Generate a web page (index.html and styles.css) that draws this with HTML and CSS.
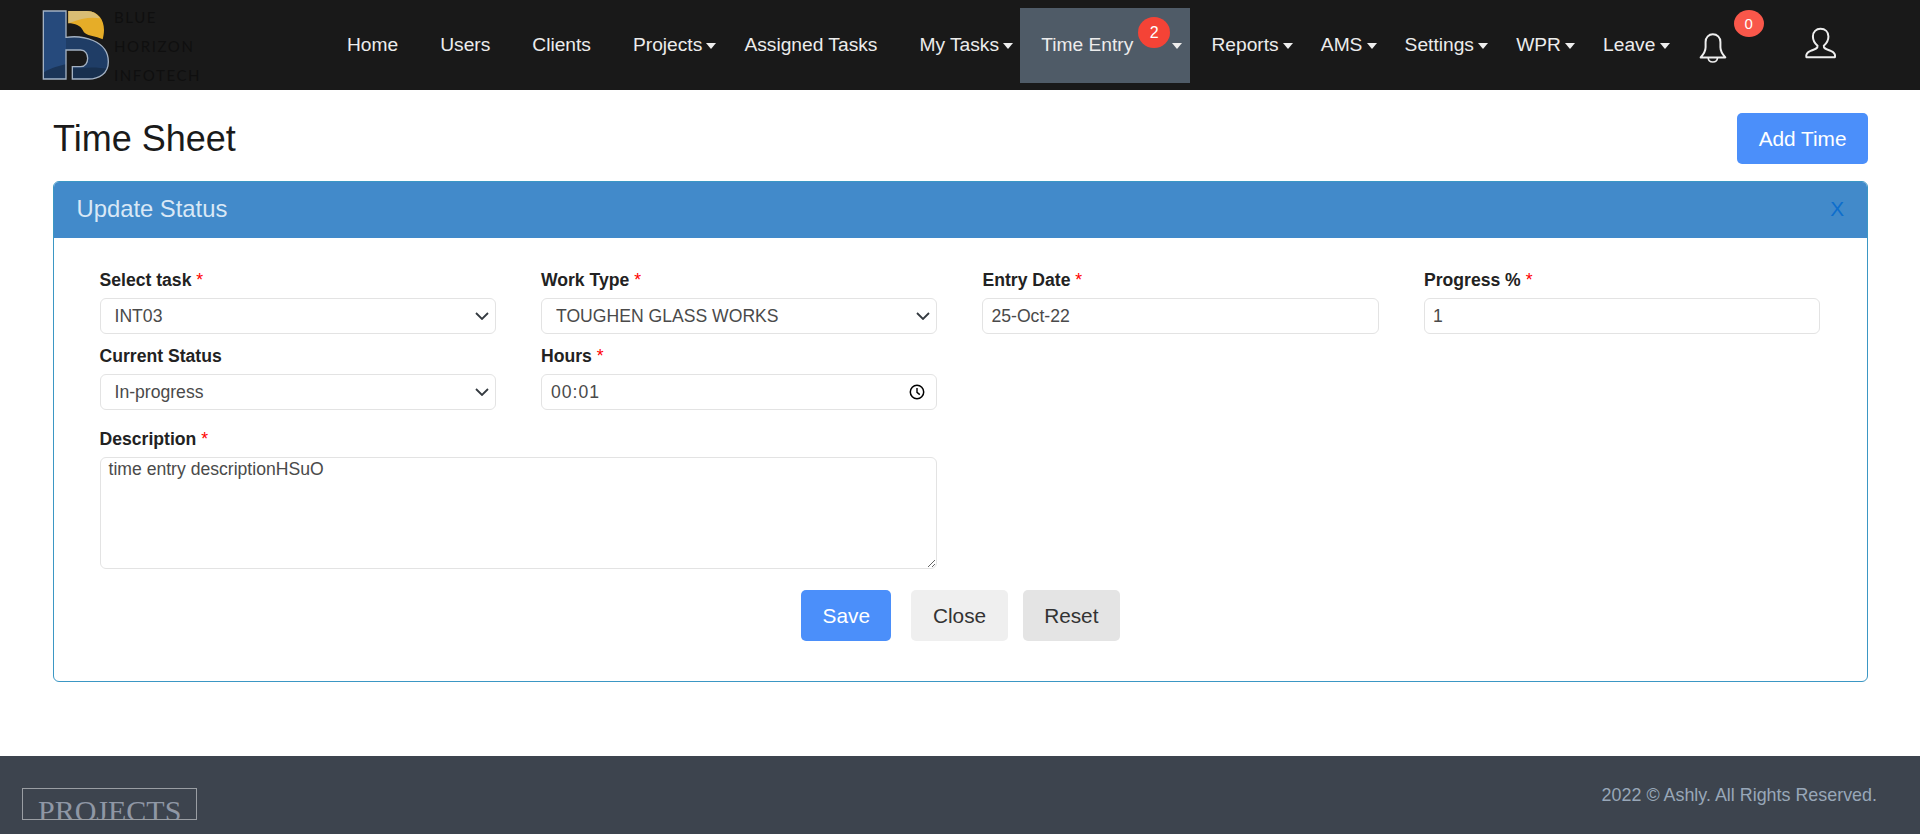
FILE: index.html
```html
<!DOCTYPE html>
<html lang="en">
<head>
    <meta charset="UTF-8">
    <title>Time Sheet</title>
    <link rel="stylesheet" href="styles.css">
</head>
<body>

    <!-- Top navigation -->
    <nav class="navbar">
        <a class="brand" href="#">
            <svg class="brand-mark" viewBox="0 0 225 240" aria-hidden="true">
                <path d="M10 18H78V97C125 90 205 105 205 170C205 205 178 222 145 222H97V185H122C150 185 150 135 122 135H78V222H10Z" fill="#264a7c"/>
                <path d="M78 97C125 90 205 105 205 170C205 205 178 222 145 222H97V185H122C150 185 150 135 122 135H78Z" fill="#1f3d66"/>
                <path d="M12 202C35 188 58 182 78 178V220H12Z" fill="#1b3558"/>
                <path d="M97 190H128C150 186 180 188 202 192C195 210 175 220 145 220H97Z" fill="#18304f"/>
                <path d="M10 18H78V97C125 90 205 105 205 170C205 205 178 222 145 222H97V185H122C150 185 150 135 122 135H78V222H10Z" fill="none" stroke="#a3b1c2" stroke-width="4"/>
                <path d="M85 18H140C175 18 192 45 192 75C192 85 190 95 188 103C170 92 135 95 128 75C122 62 105 55 85 55Z" fill="#e6ad28"/>
                <path d="M85 18H140C160 18 172 28 180 40C155 35 120 40 95 52L85 55Z" fill="#d9bd74"/>
            </svg>
            <span class="brand-name">
                <span>BLUE</span>
                <span>HORIZON</span>
                <span>INFOTECH</span>
            </span>
        </a>

        <a class="nav-link" href="#">Home</a>
        <a class="nav-link" href="#">Users</a>
        <a class="nav-link" href="#">Clients</a>
        <a class="nav-link has-menu" href="#">Projects</a>
        <a class="nav-link" href="#">Assigned Tasks</a>
        <a class="nav-link has-menu" href="#">My Tasks</a>
        <a class="nav-link has-menu active" href="#">Time Entry<span class="badge badge-entry">2</span></a>
        <a class="nav-link has-menu" href="#">Reports</a>
        <a class="nav-link has-menu" href="#">AMS</a>
        <a class="nav-link has-menu" href="#">Settings</a>
        <a class="nav-link has-menu" href="#">WPR</a>
        <a class="nav-link has-menu" href="#">Leave</a>

        <a class="nav-icon bell" href="#">
            <svg class="icon-bell" viewBox="55 95 85 95" aria-hidden="true">
                <path d="M60 171C70 160 75 152 75 140V124C75 110 85 101 97 101C110 101 120 110 120 124V140C120 152 125 160 135 171Z" fill="none" stroke="#eee" stroke-width="6" stroke-linejoin="round"/>
                <path d="M83 173C84 189 110 189 111 173" fill="none" stroke="#eee" stroke-width="5"/>
            </svg>
            <span class="badge badge-bell">0</span>
        </a>
        <a class="nav-icon user" href="#">
            <svg class="icon-user" viewBox="370 80 100 96" aria-hidden="true">
                <path d="M377 171C375 160 380 156 390 152C402 147 412 146 411 136C404 130 397 120 397 108C397 94 407 85 420 85C434 85 444 94 444 108C444 120 437 130 430 136C429 146 439 147 451 152C461 156 466 160 464 171Z" fill="none" stroke="#eee" stroke-width="6" stroke-linejoin="round"/>
            </svg>
        </a>
    </nav>

    <main class="content">
        <div class="page-head">
            <h1>Time Sheet</h1>
            <button class="btn btn-primary" type="button">Add Time</button>
        </div>

        <section class="card">
            <header class="card-head">
                <h2>Update Status</h2>
                <a class="card-close" href="#">X</a>
            </header>

            <form class="card-body">
                <div class="form-grid">
                    <div class="field">
                        <label>Select task <span class="req">*</span></label>
                        <div class="select-wrap">
                            <select class="control"><option>INT03</option></select>
                            <svg class="chevron" viewBox="0 0 14 8" aria-hidden="true"><path d="M1 1L7 7L13 1" fill="none" stroke="#343a40" stroke-width="1.8"/></svg>
                        </div>
                    </div>
                    <div class="field">
                        <label>Work Type <span class="req">*</span></label>
                        <div class="select-wrap">
                            <select class="control"><option>TOUGHEN GLASS WORKS</option></select>
                            <svg class="chevron" viewBox="0 0 14 8" aria-hidden="true"><path d="M1 1L7 7L13 1" fill="none" stroke="#343a40" stroke-width="1.8"/></svg>
                        </div>
                    </div>
                    <div class="field">
                        <label>Entry Date <span class="req">*</span></label>
                        <input class="control text" type="text" value="25-Oct-22">
                    </div>
                    <div class="field">
                        <label>Progress % <span class="req">*</span></label>
                        <input class="control text" type="text" value="1">
                    </div>
                    <div class="field">
                        <label>Current Status</label>
                        <div class="select-wrap">
                            <select class="control"><option>In-progress</option></select>
                            <svg class="chevron" viewBox="0 0 14 8" aria-hidden="true"><path d="M1 1L7 7L13 1" fill="none" stroke="#343a40" stroke-width="1.8"/></svg>
                        </div>
                    </div>
                    <div class="field">
                        <label>Hours <span class="req">*</span></label>
                        <div class="control time">
                            <input type="text" value="00:01">
                            <svg class="icon-clock" viewBox="0 0 16 16" aria-hidden="true">
                                <circle cx="8" cy="8" r="6.7" fill="none" stroke="#000" stroke-width="1.5"/>
                                <path d="M8 4V8.3L10.8 10.6" fill="none" stroke="#000" stroke-width="1.4"/>
                            </svg>
                        </div>
                    </div>
                    <div class="field field-wide">
                        <label>Description <span class="req">*</span></label>
                        <textarea class="control area">time entry descriptionHSuO</textarea>
                    </div>
                </div>

                <div class="form-actions">
                    <button class="btn btn-primary" type="button">Save</button>
                    <button class="btn btn-light" type="button">Close</button>
                    <button class="btn btn-grey" type="button">Reset</button>
                </div>
            </form>
        </section>
    </main>

    <footer class="footer">
        <div class="footer-logo">PROJECTS</div>
        <p class="copyright">2022 © Ashly. All Rights Reserved.</p>
    </footer>

</body>
</html>
```

FILE: styles.css
```css
body {
    margin: 0;
    font-family: "Liberation Sans", Arial, sans-serif;
    color: #212529;
    background-color: #fff;
}

a {
    text-decoration: none;
}

/* Top navigation */
.navbar {
    display: flex;
    align-items: flex-start;
    height: 90px;
    box-sizing: border-box;
    padding: 8px 0 7px 43px;
    background-color: #191919;
}

.brand {
    display: flex;
    width: 283px;
    height: 75px;
}

.brand-mark {
    flex: none;
    width: 75px;
    height: 80px;
    margin: -3px 0 0 -3px;
}

.brand-name {
    display: flex;
    flex-direction: column;
    margin: -5px 0 0 -1px;
    font-family: "Lato", sans-serif;
    font-size: 15px;
    line-height: 29.2px;
    letter-spacing: 1.6px;
    color: #0f0f0f;
}

.nav-link {
    position: relative;
    display: flex;
    align-items: center;
    height: 73px;
    padding: 0 21px 2px;
    font-size: 19.2px;
    color: #ececec;
    white-space: nowrap;
}

.nav-link.has-menu {
    padding-right: 7px;
}

.nav-link.has-menu::after {
    content: "";
    margin: 3px 0 0 4.2px;
    border-top: 6px solid #eee;
    border-left: 5.5px solid transparent;
    border-right: 5.5px solid transparent;
}

.nav-link.active {
    background-color: #4f5b67;
    padding-right: 8px;
}

.nav-link.active::after {
    margin-left: 39.2px;
}

.badge {
    position: absolute;
    display: flex;
    align-items: center;
    justify-content: center;
    color: #fff;
    border-radius: 50%;
}

.badge-entry {
    left: 118px;
    top: 9px;
    width: 32px;
    height: 31px;
    font-size: 16px;
    background-color: #f44336;
}

.badge-bell {
    left: 35px;
    top: 2px;
    width: 30px;
    height: 27px;
    font-size: 15px;
    background-color: #f9574a;
}

.nav-icon {
    position: relative;
    display: flex;
    height: 75px;
}

.bell {
    margin-left: 22px;
}

.user {
    margin-left: 77px;
}

.icon-bell {
    width: 28px;
    height: 32px;
    margin-top: 24px;
}

.icon-user {
    width: 33px;
    height: 32px;
    margin-top: 19px;
}

/* Page */
.content {
    padding: 23px 52px 0 53px;
}

.page-head {
    display: flex;
    align-items: center;
    justify-content: space-between;
    margin-bottom: 17px;
}

h1 {
    margin: 0;
    font-size: 36px;
    font-weight: 400;
    color: #1a1a1a;
}

.btn {
    height: 51px;
    padding: 0 21.5px;
    font-family: inherit;
    font-size: 20.8px;
    border: none;
    border-radius: 5px;
}

.btn-primary {
    color: #fff;
    background-color: #4b8ffa;
}

.btn-light {
    color: #333;
    background-color: #efefef;
}

.btn-grey {
    color: #333;
    background-color: #e4e4e4;
}

/* Update status card */
.card {
    height: 501px;
    box-sizing: border-box;
    border: 1px solid #3b97c4;
    border-radius: 6px;
    overflow: hidden;
}

.card-head {
    display: flex;
    align-items: center;
    justify-content: space-between;
    height: 54px;
    padding: 0 23px 2px 22.5px;
    background-color: #428aca;
}

.card-head h2 {
    margin: 0;
    font-size: 23.8px;
    font-weight: 400;
    color: #d9e8f6;
}

.card-close {
    font-size: 20.8px;
    color: #0d6ecd;
}

.card-body {
    padding: 33px 45.5px 0;
}

.form-grid {
    display: grid;
    grid-template-columns: repeat(4, 396.3px);
    column-gap: 45.2px;
}

.field {
    display: flex;
    flex-direction: column;
}

.field-wide {
    grid-column: 1 / span 2;
    margin-top: 7px;
}

label {
    height: 19px;
    margin-bottom: 8px;
    font-size: 17.6px;
    line-height: 19px;
    font-weight: 700;
    color: #222;
}

.req {
    font-weight: 400;
    color: #f00;
}

.control {
    box-sizing: border-box;
    width: 100%;
    height: 36px;
    margin-bottom: 13px;
    font-family: inherit;
    font-size: 17.6px;
    color: #4a4a4a;
    background-color: #fff;
    border: 1px solid #e3e3e3;
    border-radius: 6px;
}

.select-wrap {
    position: relative;
}

.select-wrap select {
    display: block;
    padding-left: 14px;
    appearance: none;
}

.chevron {
    position: absolute;
    right: 7px;
    top: 14px;
    width: 14px;
    height: 8px;
    pointer-events: none;
}

.text {
    padding: 0 8px;
}

.time {
    display: flex;
    align-items: center;
    padding: 0 11px 0 9px;
}

.time input {
    flex: 1;
    min-width: 0;
    padding: 0;
    font-family: inherit;
    font-size: 17.6px;
    letter-spacing: 1px;
    color: #4a4a4a;
    border: none;
    outline: none;
}

.icon-clock {
    width: 16px;
    height: 16px;
}

.area {
    display: block;
    height: 112px;
    margin: 0;
    padding: 1px 8px 0;
    line-height: 20px;
}

.form-actions {
    display: flex;
    justify-content: center;
    margin-top: 21px;
}

.form-actions .btn-light {
    margin: 0 15px 0 20px;
}

/* Footer */
.footer {
    display: flex;
    align-items: flex-start;
    justify-content: space-between;
    height: 78px;
    box-sizing: border-box;
    margin-top: 74px;
    padding: 32px 43px 0 22px;
    background-color: #3d444e;
}

.footer-logo {
    box-sizing: border-box;
    width: 175px;
    height: 32px;
    padding: 7px 0 0 15px;
    overflow: hidden;
    font-family: "Liberation Serif", serif;
    font-size: 30px;
    line-height: 30px;
    color: #8f97a5;
    border: 1px solid #9a9ea3;
}

.copyright {
    margin: -5px 0 0;
    font-size: 17.9px;
    line-height: 24px;
    color: #98a7b8;
}
```
